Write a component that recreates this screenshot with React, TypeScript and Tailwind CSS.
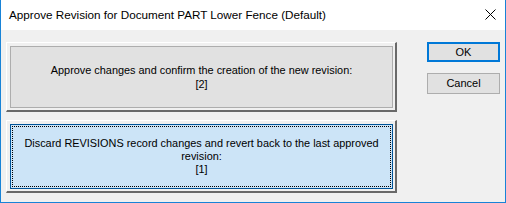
export default function App() {
  return (
    <div className="flex h-[203px] w-[506px] flex-col border-x border-b border-[#1883d7] bg-[#f0f0f0] font-['Liberation_Sans',Arial,sans-serif] text-black">
      <div className="flex h-[30px] shrink-0 items-center justify-between bg-white pl-2 pr-[9px]">
        <span className="text-[11.7px]">Approve Revision for Document PART Lower Fence (Default)</span>
        <svg width="11" height="11" viewBox="0 0 11 11" className="mb-[1px]">
          <path d="M0.5 0.5 L10.5 10.5 M10.5 0.5 L0.5 10.5" stroke="#000" strokeWidth="1" />
        </svg>
      </div>
      <div className="flex flex-1 gap-[30px] pl-[5px] pr-[5px] pt-[12px]">
        <div className="flex w-[391px] flex-col gap-[8px]">
          <div className="h-[70px] border-l border-t border-white border-b-2 border-r-2 border-b-[#696969] border-r-[#696969]">
            <div className="h-full border-l border-t border-[#f0f0f0] p-[2px]">
              <div className="flex h-full flex-col items-center justify-center border border-[#adadad] bg-[#e1e1e1] text-center text-[10.9px] leading-[14px]">
                <span>Approve changes and confirm the creation of the new revision:</span>
                <span>[2]</span>
              </div>
            </div>
          </div>
          <div className="h-[73px] border-l border-t border-white border-b-2 border-r-2 border-b-[#696969] border-r-[#696969]">
            <div className="h-full border-l border-t border-[#f0f0f0] p-[2px]">
              <div className="h-full border border-[#005499] bg-[#cce4f7] p-px">
                <div className="flex h-full flex-col items-center justify-center border border-dotted border-black text-center text-[10.9px] leading-[13px]">
                  <span>Discard REVISIONS record changes and revert back to the last approved</span>
                  <span>revision:</span>
                  <span>[1]</span>
                </div>
              </div>
            </div>
          </div>
        </div>
        <div className="flex w-[73px] flex-col gap-[11px]">
          <button className="flex h-[20px] items-center justify-center border-2 border-[#0078d7] bg-[#e1e1e1] text-[11px]">
            OK
          </button>
          <button className="flex h-[21px] items-center justify-center border border-[#adadad] bg-[#e1e1e1] text-[11px]">
            Cancel
          </button>
        </div>
      </div>
    </div>
  );
}
